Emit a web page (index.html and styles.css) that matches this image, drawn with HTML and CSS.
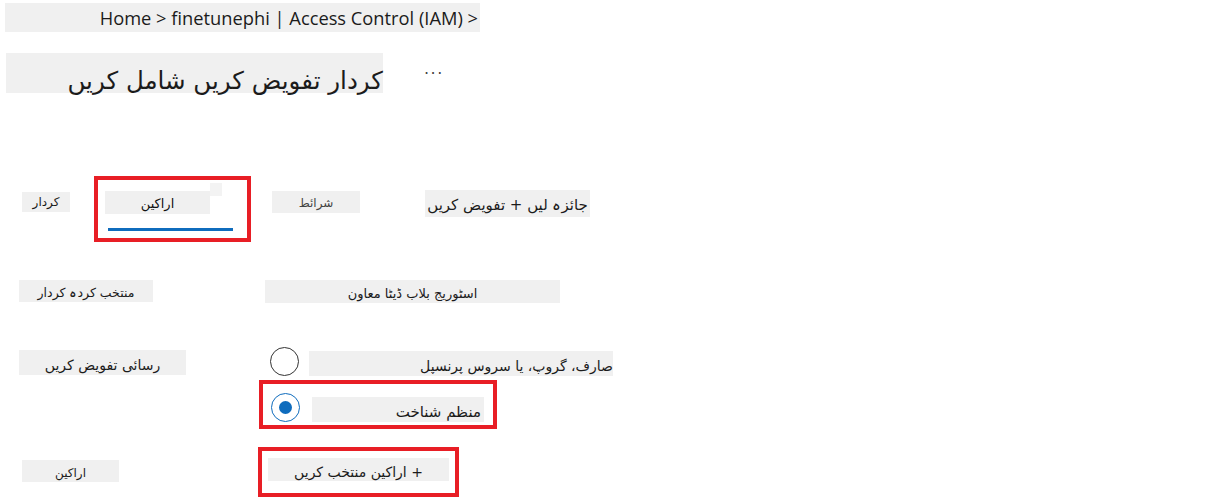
FILE: index.html
```html
<!DOCTYPE html>
<html lang="ur">
<head>
<meta charset="utf-8">
<link rel="stylesheet" href="styles.css">
</head>
<body>
<div class="page">
  <div class="breadcrumb" dir="ltr">Home &gt; finetunephi | Access Control (IAM) &gt;</div>

  <div class="header">
    <div class="title" dir="rtl">کردار تفویض کریں شامل کریں</div>
    <div class="more">&middot;&middot;&middot;</div>
  </div>

  <div class="tabs">
    <div class="box tab-role" dir="rtl">کردار</div>
    <div class="hl hl-tab">
      <div class="tab-inner">
        <div class="box tab-members" dir="rtl">اراکین</div>
        <div class="tab-mark"></div>
      </div>
      <div class="tab-underline"></div>
    </div>
    <div class="box tab-cond" dir="rtl">شرائط</div>
    <div class="box tab-review" dir="rtl">جائزہ لیں + تفویض کریں</div>
  </div>

  <div class="row row-role">
    <div class="box lbl-role" dir="rtl">منتخب کردہ کردار</div>
    <div class="box val-role" dir="rtl">اسٹوریج بلاب ڈیٹا معاون</div>
  </div>

  <div class="row row-access">
    <div class="box lbl-access" dir="rtl">رسائی تفویض کریں</div>
    <div class="radios">
      <div class="radio-row">
        <span class="radio"></span>
        <div class="box opt-user" dir="rtl">صارف، گروپ، یا سروس پرنسپل</div>
      </div>
      <div class="hl hl-mi">
        <span class="radio checked"></span>
        <div class="box opt-mi" dir="rtl">منظم شناخت</div>
      </div>
    </div>
  </div>

  <div class="row row-members">
    <div class="box lbl-members" dir="rtl">اراکین</div>
    <div class="hl hl-select">
      <div class="box btn-select" dir="rtl">+ اراکین منتخب کریں</div>
    </div>
  </div>
</div>
</body>
</html>
```

FILE: styles.css
```css
html, body {
  margin: 0;
  padding: 0;
  background: #ffffff;
}

body {
  width: 1212px;
  height: 499px;
  overflow: hidden;
  font-family: "DejaVu Sans", "Noto Sans", sans-serif;
  color: #1b1b1b;
}

.page {
  display: flex;
  flex-direction: column;
  align-items: flex-start;
}

.box {
  background: #f0f0f0;
  box-sizing: border-box;
  white-space: nowrap;
  display: flex;
  align-items: center;
  justify-content: center;
}

.breadcrumb {
  margin: 3px 0 0 5px;
  width: 475px;
  height: 29px;
  box-sizing: border-box;
  background: #f0f0f0;
  font-family: "Open Sans", "Noto Sans", sans-serif;
  font-size: 18.3px;
  line-height: 29px;
  text-align: right;
  padding-right: 2px;
  color: #1b1b1b;
}

.header {
  display: flex;
  align-items: flex-start;
  margin: 21px 0 0 6px;
}

.title {
  width: 377px;
  height: 40px;
  background: #f0f0f0;
  font-size: 24.5px;
  line-height: 40px;
  text-align: right;
  padding: 8px 0 0 0;
  box-sizing: border-box;
}

.more {
  margin: 11px 0 0 41px;
  font-size: 16px;
  letter-spacing: 1.5px;
  color: #444;
}

.tabs {
  display: flex;
  align-items: flex-start;
  margin: 83px 0 0 22px;
}

.tab-role {
  width: 48px;
  height: 20px;
  margin-top: 16px;
  font-size: 12px;
}

.hl {
  border: 4px solid #e81e25;
  box-sizing: border-box;
}

.hl-tab {
  margin-left: 24px;
  width: 157px;
  height: 66px;
  display: flex;
  flex-direction: column;
  align-items: flex-start;
}

.tab-inner {
  display: flex;
  align-items: flex-start;
  margin: 3px 0 0 7px;
}

.tab-members {
  width: 105px;
  height: 23px;
  margin-top: 8px;
  font-size: 13px;
  padding-top: 2px;
  color: #111;
}

.tab-mark {
  width: 12px;
  height: 13px;
  background: #f3f3f3;
}

.tab-underline {
  margin: 14px 0 0 10px;
  width: 125px;
  height: 3px;
  background: #0f6cbd;
}

.tab-cond {
  margin: 15px 0 0 21px;
  width: 88px;
  height: 22px;
  font-size: 12px;
  color: #444;
  padding-top: 2px;
}

.tab-review {
  margin: 14px 0 0 65px;
  width: 165px;
  height: 27px;
  font-size: 15px;
  padding-top: 2px;
}

.row {
  display: flex;
  align-items: flex-start;
}

.row-role {
  margin: 38px 0 0 19px;
}

.lbl-role {
  width: 134px;
  height: 22px;
  font-size: 12.5px;
  padding-top: 3px;
}

.val-role {
  margin-left: 112px;
  width: 295px;
  height: 23px;
  font-size: 13px;
  padding-top: 4px;
}

.row-access {
  margin: 44px 0 0 19px;
}

.lbl-access {
  margin-top: 3px;
  width: 167px;
  height: 25px;
  font-size: 14px;
  padding-top: 4px;
}

.radios {
  margin-left: 73px;
  display: flex;
  flex-direction: column;
  align-items: flex-start;
}

.radio-row {
  display: flex;
  align-items: flex-start;
  margin-left: 11px;
}

.radio {
  width: 29px;
  height: 29px;
  border: 1.3px solid #333;
  border-radius: 50%;
  box-sizing: border-box;
  background: #fff;
  flex: none;
  display: flex;
  align-items: center;
  justify-content: center;
}

.radio.checked {
  border: 1px solid #0f6cbd;
}

.radio.checked::after {
  content: "";
  width: 13px;
  height: 13px;
  border-radius: 50%;
  background: #0f6cbd;
}

.opt-user {
  margin: 4px 0 0 10px;
  width: 304px;
  height: 25px;
  font-size: 14px;
  justify-content: flex-start;
  padding-top: 4px;
}

.hl-mi {
  margin-top: 4px;
  width: 238px;
  height: 49px;
  display: flex;
  align-items: flex-start;
  padding: 9px 0 0 8px;
}

.opt-mi {
  margin: 4px 0 0 12px;
  width: 172px;
  height: 25px;
  font-size: 15px;
  justify-content: flex-start;
  padding: 4px 3px 0 0;
}

.row-members {
  margin: 18px 0 0 22px;
}

.lbl-members {
  margin-top: 13px;
  width: 97px;
  height: 22px;
  font-size: 12px;
  padding-top: 3px;
}

.hl-select {
  margin-left: 139px;
  width: 201px;
  height: 50px;
  padding: 7px 0 0 6px;
}

.btn-select {
  width: 181px;
  height: 23px;
  font-size: 14px;
  padding-top: 4px;
}
```
